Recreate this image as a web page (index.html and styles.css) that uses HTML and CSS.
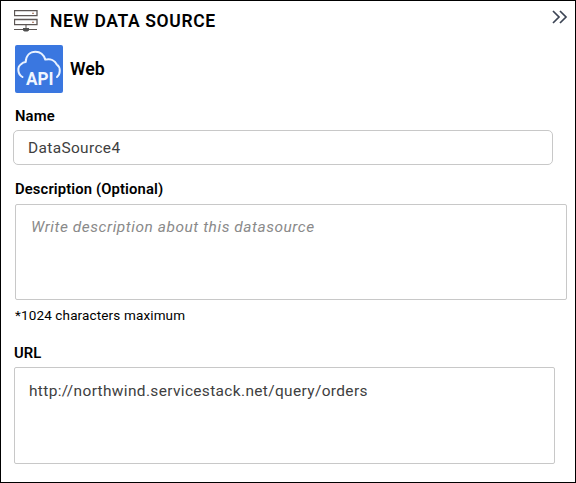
FILE: index.html
```html
<!DOCTYPE html>
<html lang="en">
<head>
<meta charset="utf-8">
<title>New Data Source</title>
<link rel="stylesheet" href="styles.css">
</head>
<body>
<main class="panel">
  <header class="header">
    <svg class="server-icon" width="24" height="22" viewBox="0 0 24 22" fill="none" stroke="#5c5654">
      <path d="M.5.5h22.500v5.200H.5zM.5 9.500h22.500v5.200H.5z" stroke-width="1.300"/>
      <path d="M12 15v3M0 19.500h23"/>
      <path d="M9 18h6v2.500l-1.500 1h-3l-1.500-1z" fill="#505050" stroke="none"/>
      <path d="M18 3.250h2M18 12.250h2" stroke="#a06a50"/>
    </svg>
    <h1 class="title">NEW DATA SOURCE</h1>
    <svg class="collapse-icon" width="16" height="14" viewBox="0 0 16 14" fill="none" stroke="#3c4454" stroke-width="1.700">
      <path d="M1 1l6 6-6 6M8 1l6 6-6 6"/>
    </svg>
  </header>
  <section class="source">
    <svg class="api-icon" width="48" height="48" viewBox="0 0 48 48">
      <rect width="48" height="48" rx="2" fill="#3a77e0"/>
      <path d="M7.500 32C2.500 29 2 22 6 19.200C7.500 17.800 9 17.200 10.700 17C11 10.500 15 6.700 20.500 6.700C25.500 6.700 28.700 9.500 30.300 14.600C35.500 13.300 40 15.500 41.800 19.500C46 22.500 45.500 29 42 32" fill="none" stroke="#e9f2ff" stroke-width="2" stroke-linecap="round" stroke-linejoin="round"/>
      <text class="api-text" x="11" y="40.300" textLength="27.500" lengthAdjust="spacingAndGlyphs">API</text>
    </svg>
    <h2 class="source-name">Web</h2>
  </section>
  <section class="field field-name">
    <label class="label">Name</label>
    <div class="box">DataSource4</div>
  </section>
  <section class="field field-description">
    <label class="label">Description (Optional)</label>
    <div class="box">Write description about this datasource</div>
    <p class="hint">*1024 characters maximum</p>
  </section>
  <section class="field field-url">
    <label class="label">URL</label>
    <div class="box">http://northwind.servicestack.net/query/orders</div>
  </section>
</main>
</body>
</html>
```
FILE: styles.css
```css
* { box-sizing: border-box; }
body { margin: 0; background: #fff; font-family: Roboto, "Liberation Sans", sans-serif; color: #000; }
h1, h2, p { margin: 0; }
.panel { width: 576px; height: 483px; border: 1px solid #000; overflow: hidden; }
.header { display: flex; align-items: flex-start; height: 44px; padding: 9px 6px 0 13px; }
.server-icon { flex: none; }
.title { margin-left: 12px; font-size: 17.5px; line-height: 22px; font-weight: 600; letter-spacing: 0.62px; white-space: nowrap; }
.collapse-icon { margin: 0 1px 0 auto; }
.source { display: flex; align-items: center; gap: 7px; height: 48px; padding-left: 14px; }
.source-name { margin-top: -1px; font-size: 17.7px; font-weight: 600; }
.api-text { font: 700 18px Roboto, sans-serif; fill: #f0f6ff; }
.field { display: flex; flex-direction: column; align-items: flex-start; }
.label { font-size: 14.8px; font-weight: 600; line-height: 18px; padding-left: 2px; letter-spacing: 0.12px; }
.box { border: 1px solid #c8c8c8; border-radius: 2px; font-size: 15.45px; line-height: 18px; letter-spacing: 0.36px; color: #404040; }
.field-name { margin: 14px 0 0 12px; }
.field-name .box { width: 540px; height: 35px; margin-top: 5px; padding: 8px 14px; border-radius: 5px; }
.field-description { margin: 15px 0 0 14px; }
.field-description .label { padding-left: 0; }
.field-description .box { width: 552px; height: 96px; margin-top: 6px; padding: 13px 15px; color: #8a8a8a; font-style: italic; letter-spacing: 0.56px; }
.hint { margin-top: 7px; font-size: 13.5px; line-height: 17px; letter-spacing: 0.14px; }
.field-url { margin: 20px 0 0 13px; }
.field-url .label { padding-left: 0; }
.field-url .box { width: 541px; height: 97px; margin-top: 5px; padding: 14px; }
```
